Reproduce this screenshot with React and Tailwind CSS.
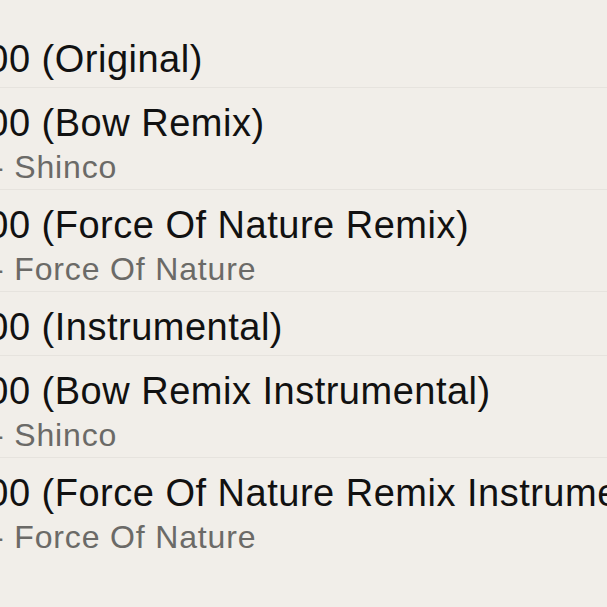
const tracks = [
  { title: "(Original)" },
  { title: "(Bow Remix)", artist: "Shinco" },
  { title: "(Force Of Nature Remix)", artist: "Force Of Nature" },
  { title: "(Instrumental)" },
  { title: "(Bow Remix Instrumental)", artist: "Shinco" },
  { title: "(Force Of Nature Remix Instrumental)", artist: "Force Of Nature" },
];

const TrackRow = ({ title, artist, last }) => {
  return (
    <li
      className={
        "pt-[15px] " +
        (artist ? "pb-[4px]" : "pb-[8px]") +
        (last ? "" : " border-b border-[#e6e3de]")
      }
    >
      <p className="ml-[-56px] whitespace-nowrap text-[38px] leading-[40px] tracking-[0.5px] text-[#111]">
        2000 {title}
      </p>
      {artist && (
        <p className="ml-[-7px] mt-[6px] whitespace-nowrap text-[32px] leading-[36px] tracking-[0.85px] text-[#6b6a67]">
          - {artist}
        </p>
      )}
    </li>
  );
};

export default function App() {
  return (
    <div
      className="h-[607px] w-[607px] overflow-hidden bg-[#f1eee9] pt-[24px]"
      style={{ fontFamily: '"Liberation Sans", Arial, sans-serif' }}
    >
      <ul>
        {tracks.map((t, i) => (
          <TrackRow key={i} {...t} last={i === tracks.length - 1} />
        ))}
      </ul>
    </div>
  );
}
